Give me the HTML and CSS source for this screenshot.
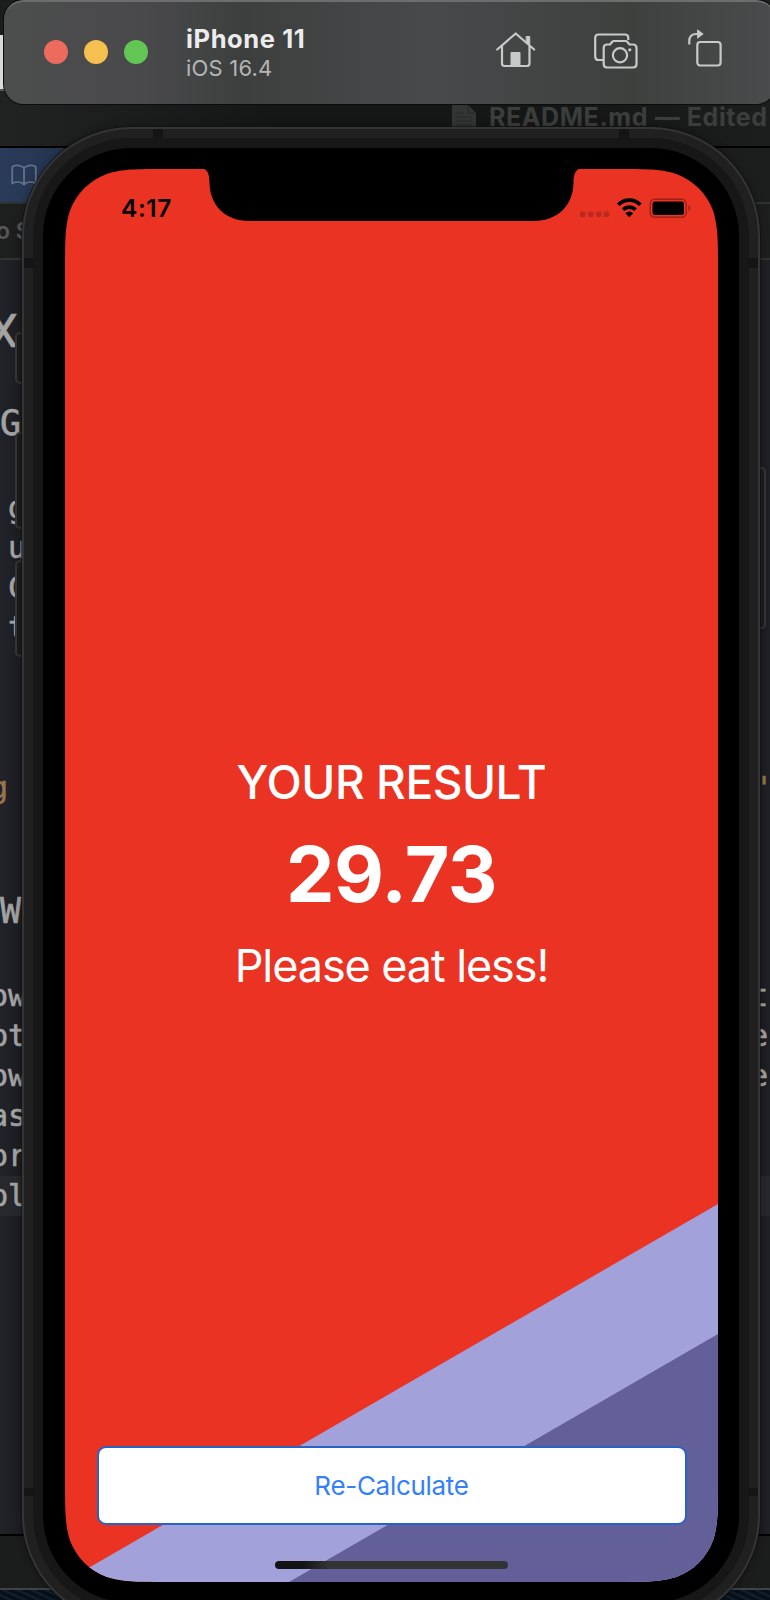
FILE: index.html
```html
<!DOCTYPE html>
<html lang="en">
<head>
<meta charset="utf-8">
<title>iPhone 11 – iOS 16.4</title>
<link rel="stylesheet" href="styles.css">
</head>
<body>
<main class="desktop">
  <section class="editor">
    <div class="backdrop"><span class="sheet"></span></div>
    <header class="titlebar">
      <svg class="doc" width="24" height="26" viewBox="0 0 24 26"><path d="M0 0H16L24 8V26H0Z" fill="#323534"/><path d="M16 0V8H24M4 12H20M4 16H20M4 20H20M4 8H12" stroke="#282b2a" stroke-width="1.2" fill="none"/></svg>
      <span>README.md — Edited</span>
    </header>
    <div class="tabs">
      <div class="tab"><svg width="26" height="22" viewBox="0 0 26 22" fill="none" stroke="#647187" stroke-width="1.8" stroke-linejoin="round"><path d="M13 4C10 .8 4 .4 1.2 3V19.500C5 17.600 10 17.600 13 20.500C16 17.600 21 17.600 24.800 19.500V3C22 .4 16 .8 13 4ZM13 4V20"/></svg></div>
    </div>
    <div class="crumbs">o S</div>
    <div class="code">
      <div class="line h1"><span>X</span></div>
      <div class="line h2"><span>G</span></div>
      <div class="block first">
        <div class="line"><span>g</span></div>
        <div class="line"><span>u</span></div>
        <div class="line"><span>C</span></div>
        <div class="line"><span>t</span></div>
      </div>
      <div class="line string"><span>g</span><span class="quote">'</span></div>
      <div class="line h2 second"><span>W</span></div>
      <div class="block">
        <div class="line"><span>ow</span><span>t</span></div>
        <div class="line"><span>pt</span><span>e</span></div>
        <div class="line"><span>ow</span><span>e</span></div>
        <div class="line"><span>as</span></div>
        <div class="line"><span>or</span></div>
        <div class="line current"><span>pl</span></div>
      </div>
    </div>
    <footer class="debugbar"></footer>
    <div class="wallpaper"></div>
  </section>

  <section class="phone">
    <i class="key mute"></i><i class="key up"></i><i class="key down"></i><i class="key power"></i>
    <div class="band">
      <i class="gap top-a"></i><i class="gap top-b"></i>
      <i class="gap left-a"></i><i class="gap left-b"></i><i class="gap right-a"></i><i class="gap right-b"></i>
      <div class="rim"><div class="bezel"><div class="screen">
        <svg class="art" width="653" height="1413" viewBox="0 0 653 1413">
          <path d="M653 1035V1413H0V1412.500Z" fill="#a3a1da"/>
          <path d="M653 1165V1413H224Z" fill="#625f99"/>
          <path d="M134 -1C142 -1 144.500 4 144.500 14C145 37 161 52 184 52H469C492 52 508 37 508.500 14C508.500 4 511 -1 519 -1Z" fill="#000"/>
        </svg>
        <div class="status">
          <span class="time">4:17</span>
          <svg class="signals" width="114" height="24" viewBox="0 0 114 24">
            <g fill="#b92a20"><rect x="1" y="15.500" width="5.500" height="5.500" rx="1.400"/><rect x="9" y="15.500" width="5.500" height="5.500" rx="1.400"/><rect x="17" y="15.500" width="5.500" height="5.500" rx="1.400"/><rect x="24.700" y="15.500" width="5.500" height="5.500" rx="1.400"/></g>
            <path d="M39.300 8.700A15.500 15.500 0 0 1 61.300 8.700M44 13.600A9 9 0 0 1 56.600 13.600" fill="none" stroke="#000" stroke-width="3.700"/>
            <path d="M50.300 21.200L46.400 17.200A5.600 5.600 0 0 1 54.200 17.200Z" fill="#000"/>
            <rect x="71.200" y="3.200" width="36" height="18" rx="4.500" fill="none" stroke="#9e231a" stroke-width="1.400"/>
            <rect x="73.500" y="5.400" width="31.500" height="13.700" rx="2.300"/>
            <path d="M109.500 9.200C112 10.500 112 14 109.500 15.300Z" fill="#9e231a"/>
          </svg>
        </div>
        <div class="result">
          <h1>YOUR RESULT</h1>
          <p class="bmi">29.73</p>
          <p class="advice">Please eat less!</p>
        </div>
        <button class="again">Re-Calculate</button>
        <div class="homebar"></div>
      </div></div></div>
    </div>
  </section>

  <header class="simbar">
    <div class="lights"><i class="red"></i><i class="amber"></i><i class="green"></i></div>
    <div class="device"><strong>iPhone 11</strong><span>iOS 16.4</span></div>
    <nav class="tools">
      <svg width="40" height="36" viewBox="0 0 40 36" fill="none" stroke="#c8c9c9" stroke-width="2.200" stroke-linecap="round" stroke-linejoin="round"><path d="M1.200 17.500L19.700 1.500L38.200 17.500M6 14V31.500Q6 34 8.500 34H31Q33.500 34 33.500 31.500V14"/><path d="M30.500 4.500H33.700V13L30.500 10.500Z" fill="#c8c9c9" stroke-width="1"/><path d="M15 34V20.500H24V34Z" fill="#c8c9c9" stroke-width="1"/></svg>
      <svg width="44" height="36" viewBox="0 0 44 36" fill="none" stroke="#c8c9c9" stroke-width="2.200" stroke-linejoin="round"><path d="M9 27H4.500Q1.200 27 1.200 23.500V5Q1.200 1.500 4.500 1.500H31Q34.300 1.500 34.300 5V7"/><path d="M9.700 15Q9.700 11.500 13 11.500H16L18.500 8.500Q19 8 20 8H31.500Q32.500 8 33 8.500L35.500 11.500H39Q42.500 11.500 42.500 15V31Q42.500 34.500 39 34.500H13Q9.700 34.500 9.700 31Z"/><circle cx="26" cy="22.200" r="7.100"/><circle cx="35.800" cy="16.800" r="1.600" fill="#c8c9c9" stroke="none"/></svg>
      <svg width="34" height="38" viewBox="0 0 34 38" fill="none" stroke="#c8c9c9" stroke-width="2.200"><rect x="9.300" y="13" width="23.300" height="23.500" rx="3"/><path d="M1.300 15.500V12Q1.300 5 8.500 5H10"/><path d="M9.500 .8L15.200 5L9.500 9.300Z" fill="#c8c9c9" stroke-width=".8"/></svg>
    </nav>
  </header>
</main>
</body>
</html>
```
FILE: styles.css
```css
* { box-sizing: border-box; }
body { margin: 0; }
h1, p { margin: 0; }
.desktop {
  position: relative;
  width: 770px;
  height: 1600px;
  overflow: hidden;
  background: #1a1c1b;
  font-family: Inter, "Liberation Sans", sans-serif;
}

/* Editor window behind the simulator */
.editor { display: flex; flex-direction: column; height: 1600px; }
.backdrop { height: 91px; padding-top: 35px; background: #1b1c1c; border-bottom: 2px solid #555756; }
.sheet { display: block; width: 4px; height: 54px; background: #d9d9d9; }
.titlebar {
  display: flex;
  gap: 13px;
  height: 55px;
  padding: 14px 0 0 452px;
  background: linear-gradient(90deg, #202322, #151716 35%, #151716 75%, #1b1e1d);
  color: #3b3e3d;
  font-size: 25px;
  font-weight: 700;
  line-height: 24px;
  white-space: nowrap;
}
.titlebar span { letter-spacing: .6px; }
.tabs { height: 58px; background: #1b1e1d; border-top: 2px solid #000; border-bottom: 2px solid #303231; }
.tab { width: 120px; height: 54px; padding: 16px 0 0 11px; background: linear-gradient(90deg, #2a3b5a, #1f2e45); }
.crumbs {
  height: 56px;
  border-bottom: 2px solid #303234;
  background: #1c1f1e;
  color: #555857;
  font-size: 23px;
  font-weight: 600;
  line-height: 54px;
  letter-spacing: 0;
  text-indent: -4px;
}
.code {
  height: 1274px;
  background: linear-gradient(90deg, #222328, #1c1d22 22px, #1c1d22 760px, #202126);
  color: #a3a3a3;
  font: 30px/40px "DejaVu Sans Mono", "Liberation Mono", monospace;
  -webkit-text-stroke: .6px currentColor;
  padding-top: 46px;
}
.line { display: flex; justify-content: space-between; height: 40px; padding: 0 2px 0 0; margin-left: -10px; }
.h1 { font: 46px/50px Roboto, sans-serif; height: 50px; margin-left: -11px; }
.h2 { font-size: 35px; margin: 47px 0 0 0; }
.block.first { margin-top: 45px; }
.first .line { margin-left: 8px; }
.string { margin-top: 120px; color: #97744f; }
.quote { margin-right: -5px; }
.h2.second { margin-top: 83px; margin-bottom: 45px; }
.current { background: #26282d; margin-left: 0; text-indent: -10px; }
.debugbar { height: 56px; background: #1a1d1c; border-top: 2px solid #000; border-bottom: 2px solid #414342; }
.wallpaper { flex: 1; background: repeating-linear-gradient(25deg, #07101a 0 3px, #14232e 4px, #0a1722 6px); }

/* Device */
.phone { position: absolute; left: 22px; top: 127px; width: 738px; height: 1497px; }
.key {
  position: absolute;
  width: 10px;
  border: 2px solid #353535;
  border-radius: 5px;
  background: #1c1c1d;
}
.mute { left: -7px; top: 205px; height: 52px; }
.up { left: -7px; top: 305px; height: 97px; }
.down { left: -7px; top: 433px; height: 97px; }
.power { right: -6px; top: 340px; height: 162px; }
.band {
  position: relative;
  height: 100%;
  padding: 9px;
  border: 2px solid #353535;
  border-radius: 109px;
  background: #202020;
  box-shadow: 0 0 0 1px rgba(16, 17, 17, .6), 0 0 8px rgba(0, 0, 0, .35);
}
.rim { height: 100%; padding: 10px; border-radius: 98px; background: #171717; }
.bezel { height: 100%; padding: 21px 21px 22px 22px; border-radius: 88px; background: #000; }
.gap { position: absolute; background: #151515; }
.top-a, .top-b { top: 0; width: 10px; height: 10px; }
.top-a { left: 129px; }
.top-b { left: 595px; }
.left-a, .left-b { left: 0; width: 10px; height: 10px; }
.right-a, .right-b { right: 0; width: 10px; height: 10px; }
.left-a, .right-a { top: 129px; }
.left-b, .right-b { top: 1359px; height: 8px; }

.screen {
  position: relative;
  display: flex;
  flex-direction: column;
  width: 653px;
  height: 1413px;
  background: #ea3323;
  clip-path: path("M100.900 0H552.100C581.200 0 595.700 0 611.300 4.900C628.400 11.200 641.800 24.600 648.100 41.700C653 57.300 653 71.800 653 100.900V1312.100C653 1341.200 653 1355.700 648.100 1371.300C641.800 1388.400 628.400 1401.800 611.300 1408.100C595.700 1413 581.200 1413 552.100 1413H100.900C71.800 1413 57.300 1413 41.700 1408.100C24.600 1401.800 11.200 1388.400 4.900 1371.300C0 1355.700 0 1341.200 0 1312.100V100.900C0 71.800 0 57.300 4.900 41.700C11.200 24.600 24.600 11.200 41.700 4.900C57.300 0 71.800 0 100.900 0Z");
}
.art { position: absolute; inset: 0; }
.status { position: relative; display: flex; justify-content: space-between; padding: 27px 25px 0 56px; height: 580px; }
.time { font-size: 24.500px; font-weight: 600; line-height: 24px; letter-spacing: .6px; }
.result { position: relative; height: 697px; color: #fff; text-align: center; white-space: nowrap; }
.result h1 { font-size: 46px; font-weight: 500; line-height: 67px; letter-spacing: -.45px; }
.bmi { font-size: 77px; font-weight: 700; line-height: 96px; margin-top: 10px; letter-spacing: -.4px; }
.advice { font-size: 45px; font-weight: 400; line-height: 60px; margin-top: 14px; letter-spacing: -1.1px; }
.again {
  position: relative;
  flex: none;
  height: 79px;
  margin: 0 31.500px;
  border: 2px solid #2a61c4;
  border-radius: 9px;
  background: #fff;
  color: #357ff7;
  font: 26px/70px Inter, "Liberation Sans", sans-serif;
  letter-spacing: -.3px;
}
.homebar {
  position: relative;
  width: 233px;
  height: 8px;
  margin: 36px 0 0 210px;
  border-radius: 4px;
  background: linear-gradient(90deg, #131313 12%, #323433 23%);
}

/* Simulator toolbar */
.simbar {
  position: absolute;
  left: 4px;
  top: 0;
  width: 772px;
  height: 104px;
  display: flex;
  align-items: flex-start;
  border-top: 2px solid #6c6e6d;
  border-radius: 20px;
  background: linear-gradient(90deg, #4c4d4d, #49494b 18%, #3d3f3e 31%, #48494b 55%, #3e403e 81%, #4a4b4c);
  box-shadow: 0 0 0 1px #0b0c0c;
}
.lights { display: flex; gap: 16px; padding: 38px 0 0 40px; }
.lights i { width: 24px; height: 24px; border-radius: 50%; }
.red { background: #ed6a5f; }
.amber { background: #f5c04f; }
.green { background: #61c654; }
.device { width: 348px; padding: 22px 0 0 38px; display: flex; flex-direction: column; white-space: nowrap; }
.device strong { color: #ececec; font-size: 25.500px; line-height: 30px; letter-spacing: .6px; }
.device span { color: #b4b5b5; font-size: 22px; line-height: 28px; letter-spacing: .2px; }
.tools { display: flex; padding-top: 29px; }
.tools svg:nth-child(1) { margin: 1px 58px 0 0; }
.tools svg:nth-child(2) { margin: 2px 50px 0 0; }
.tools svg:nth-child(3) { margin-top: -2px; }
```
